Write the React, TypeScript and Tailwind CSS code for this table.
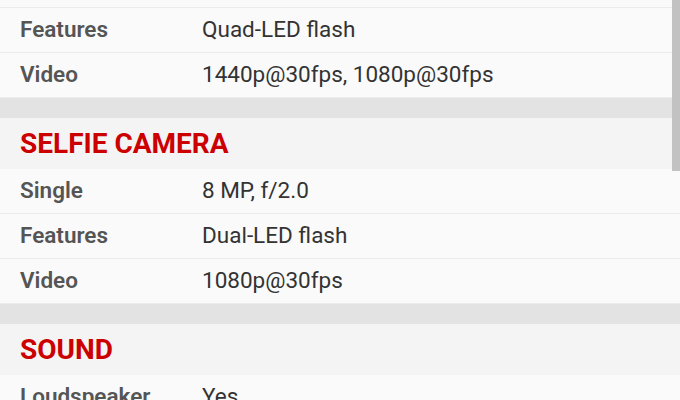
import React from 'react'

type Row = { label: string; value: string }

const sections: { title: string; rows: Row[] }[] = [
  {
    title: 'SELFIE CAMERA',
    rows: [
      { label: 'Single', value: '8 MP, f/2.0' },
      { label: 'Features', value: 'Dual-LED flash' },
      { label: 'Video', value: '1080p@30fps' },
    ],
  },
  {
    title: 'SOUND',
    rows: [
      { label: 'Loudspeaker', value: 'Yes' },
      { label: '3.5mm jack', value: 'Yes' },
    ],
  },
]

const SpecRow = ({ label, value }: Row) => (
  <div className="flex items-center h-[45px] border-b border-[#ececec] bg-[#fafafa]">
    <div className="w-[202px] pl-5 text-[22.5px] font-semibold text-[#555555]">{label}</div>
    <div className="text-[22.5px] text-[#333333]">{value}</div>
  </div>
)

const App = () => {
  return (
    <div
      className="relative w-[680px] h-[400px] overflow-hidden bg-[#fafafa]"
      style={{ fontFamily: 'Roboto, "Noto Sans", sans-serif' }}
    >
      <div className="h-[8px] border-b border-[#ececec]" />
      <SpecRow label="Features" value="Quad-LED flash" />
      <SpecRow label="Video" value="1440p@30fps, 1080p@30fps" />
      {sections.map((s) => (
        <div key={s.title}>
          <div className="h-[20px] bg-[#e3e3e3]" />
          <div className="h-[51px] flex items-center pl-5 bg-[#f4f4f4]">
            <span className="text-[28px] font-bold text-[#cc0000] leading-none">{s.title}</span>
          </div>
          {s.rows.map((r) => (
            <SpecRow key={r.label} {...r} />
          ))}
        </div>
      ))}
      {/* scrollbar thumb */}
      <div className="absolute right-0 top-0 w-[8px] h-[171px] bg-[#c2c2c2]" />
    </div>
  )
}

export default App
